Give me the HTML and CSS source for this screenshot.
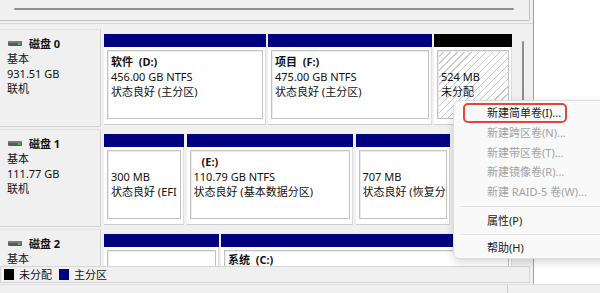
FILE: index.html
```html
<!DOCTYPE html>
<html lang="zh-CN">
<head>
<meta charset="utf-8">
<title>磁盘管理</title>
<link rel="stylesheet" href="styles.css">
</head>
<body>
<div class="screen">
  <div class="main">
    <div class="window">
      <div class="toppane"><div class="hscroll"></div></div>
      <div class="splitter"></div>
      <div class="lowerpane">
        <div class="disklist">
          <div class="row">
            <div class="label">
              <div class="title"><svg class="diskicon" width="14" height="5" viewBox="0 0 14 5"><rect x="0" y="0" width="14" height="5" rx="1" fill="#5a5a5a"/><rect x="0" y="0" width="14" height="2" fill="#7a7a7a"/><rect x="10" y="2" width="2.5" height="2" fill="#3ecf3e"/></svg><b>磁盘 0</b></div>
              <div>基本</div>
              <div>931.51 GB</div>
              <div>联机</div>
            </div>
            <div class="parts">
              <div class="part w-d">
                <div class="hdr"></div>
                <div class="body"><div class="inner"><b>软件&nbsp;&nbsp;(D:)</b><br>456.00 GB NTFS<br>状态良好 (主分区)</div></div>
              </div>
              <div class="part w-f">
                <div class="hdr"></div>
                <div class="body"><div class="inner"><b>项目&nbsp;&nbsp;(F:)</b><br>475.00 GB NTFS<br>状态良好 (主分区)</div></div>
              </div>
              <div class="part w-u">
                <div class="hdr black"></div>
                <div class="body"><div class="inner hatch">&nbsp;<br>524 MB<br>未分配</div></div>
              </div>
            </div>
          </div>
          <div class="row">
            <div class="label">
              <div class="title"><svg class="diskicon" width="14" height="5" viewBox="0 0 14 5"><rect x="0" y="0" width="14" height="5" rx="1" fill="#5a5a5a"/><rect x="0" y="0" width="14" height="2" fill="#7a7a7a"/><rect x="10" y="2" width="2.5" height="2" fill="#3ecf3e"/></svg><b>磁盘 1</b></div>
              <div>基本</div>
              <div>111.77 GB</div>
              <div>联机</div>
            </div>
            <div class="parts">
              <div class="part w-efi">
                <div class="hdr"></div>
                <div class="body"><div class="inner">&nbsp;<br>300 MB<br>状态良好 (EFI</div></div>
              </div>
              <div class="part w-e">
                <div class="hdr"></div>
                <div class="body"><div class="inner"><b class="noname">(E:)</b><br>110.79 GB NTFS<br>状态良好 (基本数据分区)</div></div>
              </div>
              <div class="part w-r">
                <div class="hdr"></div>
                <div class="body"><div class="inner">&nbsp;<br>707 MB<br>状态良好 (恢复分</div></div>
              </div>
            </div>
          </div>
          <div class="row short">
            <div class="label">
              <div class="title"><svg class="diskicon" width="14" height="5" viewBox="0 0 14 5"><rect x="0" y="0" width="14" height="5" rx="1" fill="#5a5a5a"/><rect x="0" y="0" width="14" height="2" fill="#7a7a7a"/><rect x="10" y="2" width="2.5" height="2" fill="#3ecf3e"/></svg><b>磁盘 2</b></div>
              <div>基本</div>
            </div>
            <div class="parts">
              <div class="part w-c1">
                <div class="hdr"></div>
                <div class="body"><div class="inner"></div></div>
              </div>
              <div class="part w-c">
                <div class="hdr"></div>
                <div class="body"><div class="inner"><b>系统&nbsp;&nbsp;(C:)</b></div></div>
              </div>
            </div>
          </div>
        </div>
        <div class="vscroll"><div class="vthumb"></div></div>
      </div>
      <div class="legend">
        <span class="sw black"></span><span class="lg">未分配</span>
        <span class="sw navy"></span><span class="lg">主分区</span>
      </div>
    </div>
    <div class="desk"></div>
  </div>
  <div class="status"><div class="sbcell first"></div><div class="sbcell"></div></div>

  <div class="menu">
    <div class="item hl">新建简单卷(I)...</div>
    <div class="item dis">新建跨区卷(N)...</div>
    <div class="item dis">新建带区卷(T)...</div>
    <div class="item dis">新建镜像卷(R)...</div>
    <div class="item dis">新建 RAID-5 卷(W)...</div>
    <div class="sep sep1"></div>
    <div class="item">属性(P)</div>
    <div class="sep sep2"></div>
    <div class="item">帮助(H)</div>
  </div>
</div>
</body>
</html>
```
FILE: styles.css
```css
* { box-sizing: border-box; }
html, body { margin: 0; padding: 0; }
body {
  width: 600px;
  height: 293px;
  overflow: hidden;
  background: #ffffff;
  font-family: "Noto Sans", "Noto Sans CJK SC", sans-serif;
  font-size: 11px;
  color: #000;
}
.screen {
  position: relative;
  width: 600px;
  height: 293px;
  display: flex;
  flex-direction: column;
}
.main {
  height: 284px;
  display: flex;
}
.window {
  width: 534px;
  height: 284px;
  background: #f0f0f0;
  border-right: 1px solid #a0a0a0;
  display: flex;
  flex-direction: column;
}
.desk { flex: 1; background: #ffffff; }

.toppane {
  height: 21px;
  width: 530px;
  border-bottom: 1px solid #c4c4c4;
  border-right: 1px solid #c4c4c4;
  border-bottom-right-radius: 2px;
  padding: 8px 0 0 14px;
}
.hscroll {
  width: 500px;
  height: 2px;
  background: #8e8e8e;
  border-radius: 1px;
}
.splitter { height: 2px; }

.lowerpane {
  height: 243px;
  border-top: 1px solid #d8d8d8;
  display: flex;
  overflow: hidden;
}
.disklist {
  width: 519px;
  padding-top: 5px;
  display: flex;
  flex-direction: column;
  gap: 2px;
}
.row {
  flex: none;
  height: 98px;
  display: flex;
}
.row.short { height: 37px; }
.label {
  width: 101px;
  margin-right: 3px;
  height: 98px;
  border-top: 1px solid #e2e2e2;
  border-right: 1px solid #d2d2d2;
  border-bottom: 1px solid #d2d2d2;
  padding: 6px 0 0 7px;
  line-height: 15px;
  color: #111;
}
.row.short .label { height: 37px; border-bottom: none; }
.title { display: flex; align-items: center; }
.diskicon { margin: 0 7px 0 1px; flex: none; }
.title b { font-weight: 700; }

.parts {
  display: flex;
  gap: 2px;
  padding-top: 5px;
  height: 98px;
}
.row.short .parts { height: 37px; }
.part {
  display: flex;
  flex-direction: column;
}
.w-d { width: 162px; }
.w-f { width: 164px; }
.w-u { width: 78px; }
.w-efi { width: 80px; }
.w-e { width: 166.5px; margin-left: 0.5px; }
.w-r { width: 94px; margin-left: 0.5px; }
.w-c1 { width: 115px; }
.w-c { width: 291px; }

.hdr { height: 13px; background: #000080; flex: none; }
.hdr.black { background: #000000; }
.body {
  height: 78px;
  background: #ffffff;
  padding: 3px 2px 5px 3px;
  border-right: 1px solid #dcdcdc;
  border-bottom: 1px solid #cfcfcf;
}
.row.short .body { height: 19px; padding-bottom: 0; border-bottom: none; }
.inner {
  height: 100%;
  border: 1px solid #c2c2c2;
  box-shadow: inset 1px 1px 0 #ececec;
  padding: 3px 0 0 3px;
  line-height: 15px;
  white-space: nowrap;
  overflow: hidden;
  color: #111;
}
.row.short .inner { border-bottom: none; padding-top: 1px; }
.inner b { font-weight: 700; }
.noname { padding-left: 8px; }
.hatch {
  background: repeating-linear-gradient(135deg, #ffffff 0, #ffffff 4px, #c9c9c9 4px, #c9c9c9 5px);
}

.vscroll {
  width: 11px;
  padding: 17px 0 0 3px;
}
.vthumb {
  width: 2px;
  height: 150px;
  background: #8e8e8e;
  border-radius: 1px;
}

.legend {
  height: 17px;
  width: 530px;
  border: 1px solid #d6d6d6;
  display: flex;
  align-items: center;
  padding-left: 3px;
  color: #111;
}
.sw { width: 10px; height: 11px; flex: none; }
.sw.black { background: #000; }
.sw.navy { background: #000080; margin-left: 7px; }
.lg { margin-left: 5px; line-height: 13px; }

.status {
  height: 9px;
  border-top: 1px solid #dedede;
  background: #f0f0f0;
  display: flex;
}
.sbcell.first { width: 508px; border-right: 1px solid #cfcfcf; }

.menu {
  position: absolute;
  left: 453px;
  top: 100px;
  width: 170px;
  height: 159px;
  background: #f9f9f9;
  border: 1px solid #dedede;
  border-radius: 7px;
  box-shadow: 0 3px 9px rgba(0, 0, 0, 0.16);
  padding-top: 2px;
}
.item {
  height: 19.5px;
  line-height: 19.5px;
  padding-left: 33px;
  color: #1a1a1a;
  white-space: nowrap;
}
.item.dis { color: #a3a3a3; }
.item.hl {
  height: 20px;
  line-height: 16px;
  width: 104px;
  margin-left: 9px;
  padding-left: 22px;
  border: 2px solid #e2463d;
  border-radius: 5px;
}
.sep { height: 1px; background: #e2e2e2; margin-left: 6px; }
.sep1 { margin-top: 4.5px; margin-bottom: 4.5px; }
.sep2 { margin-top: 3px; margin-bottom: 3px; }
```
